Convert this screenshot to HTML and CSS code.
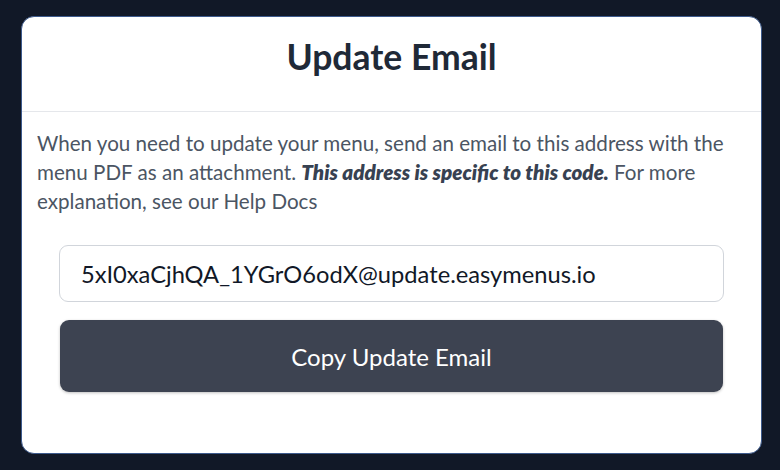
FILE: index.html
```html
<!DOCTYPE html>
<html>
<head>
<meta charset="utf-8">
<link rel="stylesheet" href="styles.css">
</head>
<body>
<div class="card">
  <div class="header"><h1 class="title">Update Email</h1></div>
  <p class="desc">When you need to update your menu, send an email to this address with the menu PDF as an attachment. <strong class="em">This address is specific to this code.</strong> For more explanation, see our Help Docs</p>
  <div class="form">
    <div class="field">5xI0xaCjhQA_1YGrO6odX@update.easymenus.io</div>
    <button class="btn">Copy Update Email</button>
  </div>
</div>
</body>
</html>
```

FILE: styles.css
```css
html, body { margin: 0; padding: 0; }
body {
  background: #111827;
  width: 780px;
  height: 470px;
  font-family: Lato, "Noto Sans", sans-serif;
  overflow: hidden;
}
.card {
  box-sizing: border-box;
  margin: 16px 0 0 21px;
  width: 741px;
  height: 438px;
  background: #ffffff;
  border: 1px solid #3d5a8c;
  border-radius: 13px;
  display: flex;
  flex-direction: column;
}
.header {
  box-sizing: border-box;
  height: 95px;
  padding-bottom: 14px;
  border-bottom: 1px solid #e5e7eb;
  display: flex;
  align-items: center;
  justify-content: center;
}
.title {
  margin: 0;
  font-size: 35.5px;
  line-height: 40px;
  font-weight: 700;
  color: #1f2937;
}
.desc {
  margin: 17px 0 0 0;
  padding: 0 14px 0 15px;
  font-size: 20.6px;
  line-height: 29px;
  color: #4b5563;
}
.em { color: #374151; font-weight: 800; font-style: italic; }
.form {
  margin-top: 29px;
  padding: 0 37px 0 37px;
  display: flex;
  flex-direction: column;
  gap: 18px;
}
.field {
  box-sizing: border-box;
  height: 57px;
  border: 1px solid #d1d5db;
  border-radius: 9px;
  padding: 0 21px;
  display: flex;
  align-items: center;
  font-size: 23.7px;
  color: #111827;
}
.btn {
  box-sizing: border-box;
  margin: 0 1px;
  height: 72px;
  border: none;
  border-radius: 9px;
  background: #3d4351;
  color: #ffffff;
  font-family: inherit;
  font-size: 24px;
  box-shadow: 0 1px 3px rgba(0,0,0,0.25);
}
```
